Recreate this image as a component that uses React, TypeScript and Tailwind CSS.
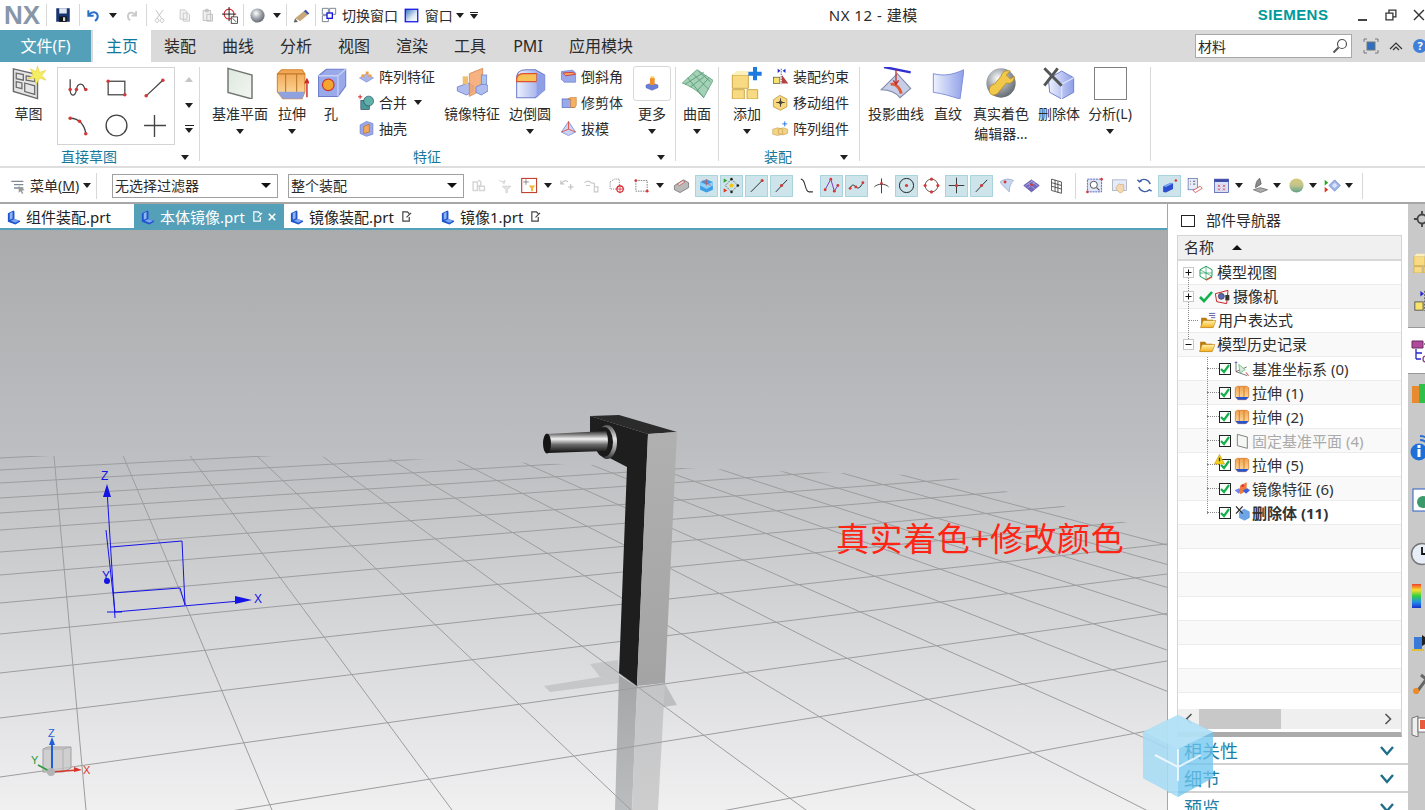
import type { ReactNode } from 'react';

function Svg({ s = 20, children }: { s?: number; children: ReactNode }) {
	return (
		<svg viewBox="0 0 24 24" width={s} height={s} className="shrink-0" fill="none">
			{children}
		</svg>
	);
}

const dot = (x: number, y: number, r = 1.7) => <circle cx={x} cy={y} r={r} fill="#d23a3a" />;

// every icon of the ribbon, the toolbars and the tree
const icons: Record<string, ReactNode> = {
	save: (
		<>
			<rect x="3" y="3" width="18" height="18" fill="#17356e" />
			<rect x="7" y="3" width="10" height="7" fill="#dfe6f2" />
			<rect x="7" y="14" width="10" height="7" fill="#111" />
			<rect x="12" y="15" width="3" height="5" fill="#d8d8d8" />
		</>
	),
	undo: <path d="M5 5v8h8M6 12c4-6 12-5 13 1 .5 3-1 6-4 8" stroke="#2a70c8" strokeWidth="3" />,
	redo: <path d="M19 5v8h-8M18 12c-4-6-12-5-13 1-.5 3 1 6 4 8" stroke="#c9c9c9" strokeWidth="3" />,
	cut: <path d="M6 3l9 13M18 3L8 16M8 17a3 3 0 1 0 .1 0M16 17a3 3 0 1 0 .1 0" stroke="#c6c6c6" strokeWidth="1.6" />,
	copy: <path d="M5 3h8l3 3v12H5zM10 8h7l3 3v10H10z" fill="#f2f2f2" stroke="#c6c6c6" strokeWidth="1.4" />,
	paste: <path d="M5 4h12v16H5zM9 2h4v4H9zM11 10h9v11h-9z" fill="#eee" stroke="#bdbdbd" strokeWidth="1.4" />,
	target: (
		<>
			<circle cx="10" cy="10" r="7" stroke="#d8222a" strokeWidth="1.5" />
			<path d="M10 0v20M0 10h20" stroke="#111" strokeWidth="1.3" />
			<rect x="13" y="14" width="9" height="9" fill="#fff" stroke="#111" />
			<path d="M15 16l5 5" stroke="#111" />
		</>
	),
	ball: <circle cx="12" cy="12" r="10" fill="url(#gSphere)" />,
	pencil: (
		<>
			<path d="M3 16L15 6l6 5-11 9z" fill="#c8a878" />
			<path d="M15 6l3-2 5 5-2 2z" fill="#3a4ca8" />
			<path d="M3 16l4 5-6 1z" fill="#666" />
		</>
	),
	switchWin: (
		<>
			<path d="M2 2h9v9H2zM13 2h9v9h-9zM2 13h9v9H2z" stroke="#7b8794" strokeWidth="1.5" />
			<rect x="9" y="9" width="8" height="8" fill="#fff" stroke="#1515e0" strokeWidth="2" />
		</>
	),
	win: <rect x="2" y="2" width="20" height="20" fill="url(#gWin)" stroke="#1212e0" strokeWidth="2" />,
	sketch: (
		<>
			<path d="M1 2l17 4v17L1 18z" fill="#e6e6e6" stroke="#6a6a6a" strokeWidth="1" />
			<path d="M3 5l5 1v4L3 9zM10 7l6 1v3l-6-1zM3 11l4 1v4l-4-1zM9 12l7 2v6l-7-2z" stroke="#6a6a6a" strokeWidth=".9" />
			<path d="M18 0l1.4 4.5L24 3l-3 3.5L24 10l-4.5-1.5L17 13l-1-4.5L11 9l4-2.5L13 2l4 2z" fill="#f6ee62" stroke="#e4cb2c" strokeWidth=".4" />
		</>
	),
	spline: (
		<>
			<path d="M4 4v10c0 7 5 7 6 0 1-7 7-7 8 0" stroke="#444" strokeWidth="1.2" />
			{dot(4, 14)}
			{dot(10, 14)}
			{dot(19, 14)}
		</>
	),
	rectS: (
		<>
			<rect x="4" y="6" width="16" height="13" stroke="#444" strokeWidth="1.2" />
			{dot(4, 6)}
			{dot(20, 19)}
		</>
	),
	lineS: (
		<>
			<path d="M4 20L20 5" stroke="#444" strokeWidth="1.2" />
			{dot(4, 20)}
			{dot(20, 5)}
		</>
	),
	arcS: (
		<>
			<path d="M4 5c9 0 14 7 15 15" stroke="#444" strokeWidth="1.3" />
			{dot(4, 5)}
			{dot(13, 8)}
			{dot(19, 20)}
		</>
	),
	circleS: <circle cx="12" cy="12" r="10" stroke="#444" strokeWidth="1.3" />,
	plusS: <path d="M12 2v21M2 12h21" stroke="#444" strokeWidth="1.3" />,
	datum: <path d="M3 1l18 5v18L3 19z" fill="url(#gDatum)" stroke="#6f7670" strokeWidth="1.1" />,
	extrude: (
		<>
			<path d="M1 5l3-3h15l2 3v13l-2 5H5l-4-5z" fill="url(#gOrange)" stroke="#d58a30" strokeWidth=".8" />
			<path d="M7 5v15M15 5v15M1 5h20" stroke="#c07a2c" strokeWidth=".8" />
			<path d="M1 18l4 5h14l2-5z" fill="#8fa2df" />
			<path d="M22.5 22V10M21 12l1.5-3 1.5 3" stroke="#d02020" strokeWidth="1" />
		</>
	),
	hole: (
		<>
			<path d="M2 6l6-5h15v13l-6 8H2z" fill="#9aa9ea" stroke="#6c7ccb" strokeWidth=".8" />
			<path d="M2 6h15v16M17 6l6-5" stroke="#c8d2f4" strokeWidth="1" />
			<circle cx="9.5" cy="13" r="4.5" fill="#f3a52f" stroke="#d12e2e" strokeWidth=".9" />
		</>
	),
	pattern: (
		<>
			<path d="M2 14l10-6 10 6-10 6z" fill="#a9b5ea" stroke="#6c7ccb" strokeWidth=".7" />
			<rect x="5" y="9" width="4" height="4" fill="#f0a040" />
			<rect x="11" y="5" width="4" height="4" fill="#f0a040" />
			<rect x="15" y="9" width="4" height="4" fill="#f0a040" />
		</>
	),
	unite: (
		<>
			<rect x="4" y="9" width="12" height="13" fill="#4b9a9a" stroke="#235" strokeWidth=".8" />
			<circle cx="15" cy="10" r="7" fill="#5fb0a6" stroke="#235" strokeWidth=".8" />
			<path d="M3 1v6M0 4h6" stroke="#d02020" strokeWidth="1.3" />
		</>
	),
	shell: (
		<>
			<path d="M3 7l9-5 9 3v15l-9 3-9-4z" fill="#9aa9ea" stroke="#6c7ccb" />
			<path d="M8 9l8-3v11l-8 2z" fill="#f3a860" stroke="#c06a20" />
		</>
	),
	mirror: (
		<>
			<path d="M1 15l8-3 4 2v4l-5 3-7-3z" fill="#aebcf0" stroke="#7787d0" strokeWidth=".7" />
			<path d="M10 5l10-4v16l-10 5z" fill="#f5a56c" opacity=".85" stroke="#d87a3a" strokeWidth=".7" />
			<path d="M15 15l6-3 3 2v4l-5 3-4-2z" fill="#aebcf0" stroke="#7787d0" strokeWidth=".7" />
			<rect x="19" y="6" width="4" height="7" fill="#a9c4ee" stroke="#7787d0" strokeWidth=".6" />
			<rect x="5" y="7" width="4" height="6" fill="#f0c070" />
		</>
	),
	blend: (
		<>
			<path d="M2 8c0-4 3-6 7-6h7l7 4v11l-7 6H2z" fill="url(#gBlue)" stroke="#6c7ccb" strokeWidth=".8" />
			<path d="M2 9c0-3 3-4 6-4h9v6H2z" fill="#f7c25a" stroke="#e0522a" strokeWidth=".9" />
			<path d="M17 5l6 1v11l-6 6z" fill="#8e9fe8" />
		</>
	),
	chamfer: (
		<>
			<path d="M2 5l16-2 4 4v13H6l-4-4z" fill="#9aa9ea" stroke="#6c7ccb" />
			<path d="M4 7l15-1 2 3-13 2z" fill="#f3a860" stroke="#d03030" strokeWidth="1.2" />
		</>
	),
	trim: (
		<>
			<rect x="3" y="7" width="18" height="12" fill="#9aa9ea" stroke="#5566c0" />
			<path d="M11 7l4-2h8v11l-2 3h-6V7z" fill="#f4b15f" stroke="#c9752a" strokeWidth=".8" />
		</>
	),
	draft: (
		<>
			<path d="M12 2L2 17l10 5 10-5z" fill="#c9d2f2" stroke="#6c7ccb" />
			<path d="M12 2v11M2 17l10-4 10 4" stroke="#e04830" strokeWidth="1.2" />
		</>
	),
	more: (
		<>
			<path d="M3 15l9-3 9 3v4l-9 4-9-4z" fill="#6a7ed8" stroke="#4a5cb0" strokeWidth=".7" />
			<rect x="9" y="4" width="7" height="11" rx="1" fill="#f0902c" />
			<rect x="10" y="2" width="5" height="3" fill="#f9d050" />
		</>
	),
	surface: (
		<>
			<path d="M1 12L12 2l12 8-7 13C12 17 6 14 1 12z" fill="#a4d2b6" stroke="#6aa585" strokeWidth=".7" />
			<path d="M5 8l12 15M9 5l12 12M13 3l9 8M3 13l14-9M7 15l12-9M12 18l9-10" stroke="#5f9d7c" strokeWidth=".7" />
		</>
	),
	add: (
		<>
			<path d="M1 6h12v10H1zM1 17h9v7H1zM12 17h8v7h-8z" fill="#f8da82" stroke="#c9a440" strokeWidth=".7" />
			<path d="M1 6l3-3h9v3z" fill="#fdf0bb" />
			<path d="M18 0v10M13 5h10" stroke="#1f7ae0" strokeWidth="3" />
		</>
	),
	constraint: (
		<>
			<rect x="2" y="13" width="9" height="9" fill="#f7e36a" stroke="#555" />
			<path d="M14 22V10l9 12z" fill="#b34242" />
			<path d="M13 1v22" stroke="#222" strokeDasharray="2 1.5" />
			<path d="M8 1l4 3-4 3zM19 1l-4 3 4 3z" fill="#2a2ac8" />
		</>
	),
	move: (
		<>
			<path d="M2 8l9-6 10 5v11l-9 5-10-5z" fill="#f8d87c" stroke="#b3872e" strokeWidth="1" />
			<path d="M12 9l3 3-3 3-3-3zM12 6v12M6 12h12" stroke="#333" strokeWidth="1.2" />
		</>
	),
	arrayC: (
		<>
			<path d="M1 13l7-2 7 2v7l-7 2-7-2zM9 13l7-2 6 2v6l-6 2-7-2z" fill="#f3d385" stroke="#b9913e" strokeWidth=".7" />
			<path d="M18 2v7M14.5 5.5h7" stroke="#2a7ae0" strokeWidth="1.4" />
		</>
	),
	project: (
		<>
			<path d="M1 17L13 5l10 11-8 7C11 18 6 17 1 17z" fill="#c7cfe6" stroke="#7b86a8" strokeWidth=".8" />
			<path d="M8 13c4-1 7 3 8 7" stroke="#dd5a36" strokeWidth="2.2" />
			<path d="M3 0l20 4" stroke="#3030d0" strokeWidth="1.8" />
			<path d="M12 2v10M10 10l2 3 2-3" stroke="#c03030" strokeWidth="1" />
		</>
	),
	ruled: <path d="M1 5c8 2 14 1 23-3l-3 22c-7-2-12-4-20-5z" fill="url(#gBlue)" stroke="#7a8ad8" strokeWidth=".7" />,
	studio: (
		<>
			<circle cx="12" cy="12" r="11" fill="url(#gSphere)" />
			<path d="M4 20c2 2 5 1 7-2l5-6c3 1 6-1 6-5l-3 2-3-3 3-3c-4-1-6 1-7 4l-5 6c-3 0-5 4-3 7z" fill="#f1c84a" stroke="#b38a1e" strokeWidth=".6" />
		</>
	),
	del: (
		<>
			<path d="M4 9l10-6 9 5v11l-9 5-9-5z" fill="url(#gBlue)" stroke="#6c7ccb" strokeWidth=".7" />
			<path d="M14 13l9-5M14 13v11M14 13L5 9" stroke="#dfe6fb" strokeWidth=".9" />
			<path d="M1 1l13 13M11 1L1 14" stroke="#555" strokeWidth="2.2" />
		</>
	),
	menu: (
		<>
			<path d="M2 5h18M6 10h14M6 15h14" stroke="#7d8a96" strokeWidth="2" />
			<path d="M13 12l9 6-4 1 2 4-2 1-2-4-3 2z" fill="#9a9a9a" />
		</>
	),
	g1: <path d="M3 7h6v12H3zM10 5a4 4 0 1 1 0 8M12 13h7v6h-7z" stroke="#d5d5d5" strokeWidth="2" />,
	g2: <path d="M4 4c2 3 6 3 9 1l-2 5M9 13h12l-5 5v4h-2v-4z" fill="#e4e4e4" stroke="#ccc" />,
	filterBox: (
		<>
			<rect x="1" y="2" width="21" height="20" fill="#fff" stroke="#c0392b" strokeWidth="1.5" />
			<path d="M7 3v8M3 7h8" stroke="#666" />
			<path d="M11 12h9l-3 4v4h-3v-4z" fill="#f2b632" />
		</>
	),
	g3: <path d="M5 10c1-5 6-6 9-3M4 5v5h5M14 14h8M18 10v8" stroke="#bdbdbd" strokeWidth="1.5" />,
	g4: <path d="M2 8c3-3 7-3 9 0l5 1v5h5v7h-5v-6M4 12h6" stroke="#c9c9c9" strokeWidth="1.7" />,
	pointCube: (
		<>
			<path d="M3 7l6-4h7v10l-5 4H3z" stroke="#555" strokeDasharray="1.5 1.5" />
			<circle cx="17" cy="17" r="4.5" stroke="#d21f26" strokeWidth="1.5" />
			<path d="M17 11v12M11 17h12" stroke="#d21f26" />
		</>
	),
	selRect: (
		<>
			<rect x="4" y="5" width="16" height="15" stroke="#444" strokeDasharray="2 1.5" />
			{dot(4, 5, 2)}
			{dot(20, 20, 2)}
		</>
	),
	eraser: (
		<>
			<path d="M2 12l13-8 7 4v7l-12 7-8-4z" fill="#b9b9b9" stroke="#666" />
			<path d="M6 10l8-5 3 2-8 5z" fill="#e2e2e2" stroke="#c33" strokeWidth=".8" />
		</>
	),
	cubeBlue: (
		<>
			<path d="M3 7l9-4 9 4v11l-9 4-9-4z" fill="#3d9ee8" />
			<path d="M3 7l9 4 9-4v5l-9 5-9-5z" fill="#8fd0f7" />
			<path d="M12 3v9M6 5l12 7" stroke="#d84a4a" strokeWidth=".9" />
		</>
	),
	snapAll: (
		<>
			<path d="M12 3l9 9-9 9-9-9z" stroke="#333" strokeDasharray="2 1.5" />
			<circle cx="12" cy="12" r="3" fill="#f5c518" />
			<path d="M1 2l5 3-5 3z" fill="#2aa52a" />
			<path d="M1 16l5 3-5 3z" fill="#d32" />
			<circle cx="12" cy="3" r="1.8" fill="#222" />
			<circle cx="21" cy="12" r="1.8" fill="#222" />
			<circle cx="12" cy="21" r="1.8" fill="#222" />
		</>
	),
	lineEnd: (
		<>
			<path d="M4 21L20 5" stroke="#222" strokeWidth="1.3" />
			{dot(20, 5, 2.2)}
		</>
	),
	lineMid: (
		<>
			<path d="M4 21L20 4" stroke="#222" strokeWidth="1.3" />
			{dot(12, 12, 2.2)}
		</>
	),
	curveS: <path d="M4 3c8 0 4 17 12 18h5" stroke="#333" strokeWidth="1.5" />,
	poly: (
		<>
			<path d="M3 18L11 3l5 17 5-8" stroke="#7a2ac0" strokeWidth="1.3" />
			{dot(3, 18, 2)}
			{dot(11, 3, 2)}
			{dot(16, 20, 2)}
			{dot(21, 12, 2)}
		</>
	),
	waves: (
		<>
			<path d="M2 17c4-8 6-6 9-3s6 2 10-6" stroke="#222" strokeWidth="1.3" />
			{dot(3, 16, 2)}
			{dot(11, 14, 2)}
			{dot(21, 8, 2)}
		</>
	),
	inter: (
		<>
			<path d="M2 14c4-5 16-5 20 0M12 2v21" stroke="#333" strokeWidth="1.3" />
			{dot(12, 9, 2)}
		</>
	),
	circleC: (
		<>
			<circle cx="12" cy="12" r="10" stroke="#222" strokeWidth="1.4" />
			{dot(12, 12, 2.2)}
		</>
	),
	circleQ: (
		<>
			<circle cx="12" cy="12" r="9" stroke="#555" strokeWidth="1.3" />
			{dot(12, 3, 2.2)}
			{dot(21, 12, 2.2)}
			{dot(12, 21, 2.2)}
			{dot(3, 12, 2.2)}
		</>
	),
	cross: (
		<>
			<path d="M12 1v22M1 12h22" stroke="#222" strokeWidth="1.2" />
			{dot(12, 12, 2.2)}
		</>
	),
	faceDot: (
		<>
			<path d="M3 7c6-5 13-5 19-2-4 4-6 8-6 16C10 15 6 12 3 7z" fill="#c9d8f0" stroke="#7f93c0" strokeWidth=".8" />
			{dot(10, 7, 2)}
		</>
	),
	mesh: (
		<>
			<path d="M1 12l11-8 11 8-11 9z" fill="#7268c0" stroke="#4c4490" strokeWidth=".8" />
			<path d="M6 8l11 9M11 5l10 8M6 16l11-9M3 13l11-8" stroke="#d8d4f0" strokeWidth=".7" />
			{dot(12, 11, 2)}
		</>
	),
	grid: <path d="M5 3l14 4v16L5 19zM10 4v16M14 6v16M5 8l14 4M5 13l14 4" stroke="#333" strokeWidth="1.1" />,
	zoomBox: (
		<>
			<rect x="2" y="3" width="20" height="18" fill="#dfe6f7" stroke="#2b3ab0" strokeDasharray="3 1" />
			<circle cx="11" cy="11" r="5" fill="#fff" stroke="#555" strokeWidth="1.4" />
			<path d="M15 15l4 4" stroke="#555" strokeWidth="1.5" />
			{dot(22, 3, 1.8)}
			{dot(2, 21, 1.8)}
		</>
	),
	pan: (
		<>
			<rect x="2" y="4" width="20" height="15" fill="#e6ecf7" stroke="#9aa4b8" />
			<path d="M11 10c1-1 2 0 2 1l2-1 1 1 2 0v6c0 3-2 5-4 5h-2c-2-1-4-4-5-7z" fill="#f4d9b0" stroke="#b99361" strokeWidth=".7" />
		</>
	),
	rotate: <path d="M20 10A9 9 0 0 0 5 6M4 14a9 9 0 0 0 15 4M2 4l3 3 3-2M22 20l-3-2-3 2" stroke="#3f5fa8" strokeWidth="2" />,
	fly: (
		<>
			<path d="M3 13l11-5 3 1v8L7 22l-4-1z" fill="#2a4fd0" />
			<path d="M14 8l3 1-10 5-4-1z" fill="#7fa3f0" />
			{dot(21, 5, 1.8)}
		</>
	),
	listView: (
		<>
			<rect x="3" y="2" width="13" height="16" fill="#e8ecf8" stroke="#5a6ab0" />
			<path d="M6 6h1M10 6h3M6 10h1M10 10h3" stroke="#445" strokeWidth="1.2" />
			<path d="M10 19l10-6 3 3-10 6z" fill="#fff" stroke="#c33" />
		</>
	),
	calendar: (
		<>
			<rect x="2" y="3" width="20" height="19" fill="#dbe2f7" stroke="#3c4ca8" />
			<rect x="2" y="3" width="20" height="4" fill="#3c4ca8" />
			<path d="M7 11l3 3M10 11l-3 3M14 11l3 3M17 11l-3 3M7 16l3 3M10 16l-3 3M14 16l3 3M17 16l-3 3" stroke="#d33" />
		</>
	),
	scan: (
		<>
			<path d="M2 18l10-3 10 3-10 4z" fill="#aaa" stroke="#666" />
			<path d="M5 15c0-7 3-12 6-13l2 8z" fill="#8c8c8c" stroke="#555" />
		</>
	),
	globe: <circle cx="12" cy="12" r="10" fill="url(#gEarth)" />,
	flag: (
		<>
			<path d="M1 4l5 4-5 4z" fill="#2aa52a" />
			<path d="M1 14l5 4-5 4z" fill="#d32" />
			<path d="M7 12l8-8 8 8-8 8z" fill="#9fb6ec" stroke="#6c7ccb" />
			<path d="M11 12l4-4 4 4-4 4z" fill="#dbe4fb" />
		</>
	),
	csysGreen: (
		<>
			<path d="M12 2l9 5v10l-9 5-9-5V7z" stroke="#1e9e5a" strokeWidth="1.5" />
			<path d="M12 2v20M3 12h18M3 7l18 10" stroke="#1e9e5a" strokeWidth="1" />
			<path d="M12 23l9-5" stroke="#e0482c" strokeWidth="1.8" />
		</>
	),
	camera: (
		<>
			<path d="M2 7l19-5-2 20-15-3z" fill="#f6f6f6" stroke="#c82828" strokeWidth="1.5" />
			<circle cx="11" cy="11" r="4.5" fill="#5968b8" stroke="#333" />
			<rect x="17" y="9" width="6" height="8" fill="#333" />
		</>
	),
	folder: (
		<>
			<path d="M3 8h7l2 3h8v11H3z" fill="#b97a0e" />
			<path d="M2 22l4-10h18l-4 10z" fill="url(#gFolder)" stroke="#b97a0e" strokeWidth=".8" />
		</>
	),
	folderDoc: (
		<>
			<path d="M14 2h9M14 5h9M17 8h6" stroke="#4a4a9c" strokeWidth="1.2" />
			<path d="M3 8h7l2 3h8v11H3z" fill="#b97a0e" />
			<path d="M2 22l4-10h18l-4 10z" fill="url(#gFolder)" stroke="#b97a0e" strokeWidth=".8" />
		</>
	),
	csysT: (
		<>
			<path d="M3 1v15M3 16l17 6M3 16l16-7" stroke="#555" strokeWidth="1.2" />
			<path d="M7 5l10 8-8 5z" fill="#d8e8d8" stroke="#2a5" strokeWidth=".8" />
			<path d="M1 2h4" stroke="#2626c8" />
			<path d="M18 17l4 5" stroke="#c22" strokeWidth="1.3" />
		</>
	),
	extrudeT: (
		<>
			<path d="M2 4l3-2h14l3 2v14l-4 4H6l-4-4z" fill="url(#gOrange)" stroke="#cf6d16" strokeWidth="1" />
			<path d="M8 3v17M15 3v17" stroke="#cf6d16" strokeWidth="1.2" />
			<path d="M2 18l4 4h12l4-4z" fill="#2a52cc" />
		</>
	),
	datumT: <path d="M5 2l15 4v17L5 19z" fill="#f4f7f4" stroke="#666" strokeWidth="1.2" />,
	mirrorT: (
		<>
			<path d="M1 14l7-3 5 3-6 5z" fill="#6f86e8" />
			<path d="M9 7l10-5v13l-10 5z" fill="#ee7a40" />
			<path d="M13 14l7-3 4 3-6 5z" fill="#3a5fd8" />
			<circle cx="13" cy="7" r="2" fill="#d33" />
		</>
	),
	delT: (
		<>
			<path d="M8 11l7-5 8 4v9l-7 4-8-4z" fill="#6ca6e8" stroke="#3c78c0" strokeWidth=".6" />
			<path d="M3 2l10 11M13 2L3 13" stroke="#333" strokeWidth="2" />
		</>
	),
};

function Ic({ n, s }: { n: string; s?: number }) {
	return <Svg s={s}>{icons[n]}</Svg>;
}

function Caret({ className = '' }: { className?: string }) {
	return <span className={`block h-0 w-0 shrink-0 border-x-[4.5px] border-t-[5px] border-x-transparent border-t-[#1f1f1f] ${className}`} />;
}

function Sep() {
	return <div className="my-[5px] w-px shrink-0 bg-[#d9d9d9]" />;
}

function Big({ n, s = 34, label, sub, caret, w, framed }: { n?: string; s?: number; label: string; sub?: string; caret?: boolean; w: string; framed?: boolean }) {
	return (
		<div className={`flex shrink-0 flex-col items-center ${w}`}>
			<div className="flex h-[42px] items-center justify-center">
				{framed ? (
					<div className="flex h-[35px] w-[38px] items-center justify-center rounded-[3px] border border-[#d8d8d8]">{n && <Ic n={n} s={s} />}</div>
				) : n ? (
					<Ic n={n} s={s} />
				) : (
					<div className="h-[33px] w-[33px] border border-[#808080] bg-white" />
				)}
			</div>
			<div className="h-[20px] whitespace-nowrap leading-[20px]">{label}</div>
			{sub && <div className="h-[20px] whitespace-nowrap leading-[20px]">{sub}</div>}
			{caret && (
				<div className="flex h-[14px] items-center">
					<Caret />
				</div>
			)}
		</div>
	);
}

function Small({ n, label, caret }: { n: string; label: string; caret?: boolean }) {
	return (
		<div className="flex h-[26px] items-center whitespace-nowrap">
			<span className="mr-[5px] flex w-[16px] justify-center">
				<Ic n={n} s={17} />
			</span>
			{label}
			{caret && <Caret className="ml-[7px]" />}
		</div>
	);
}

function GroupTitle({ title, w }: { title: string; w: string }) {
	return (
		<div className="flex h-[18px] items-center">
			<div className={`text-center leading-[18px] text-[#17789c] ${w}`}>{title}</div>
			<Caret className="ml-[3px]" />
		</div>
	);
}

function Tb({ n, on, w = 'w-[25px]' }: { n: string; on?: boolean; w?: string }) {
	return (
		<div className={`flex h-[22px] shrink-0 items-center justify-center ${w}`}>
			<div className={`flex h-[22px] w-[23px] items-center justify-center border ${on ? 'border-[#a9d3dd] bg-[#cde4ea]' : 'border-transparent'}`}>
				<Ic n={n} s={17} />
			</div>
		</div>
	);
}

function ComboBox({ text, w }: { text: string; w: string }) {
	return (
		<div className={`flex h-[24px] shrink-0 items-center justify-between border border-[#a0a0a0] bg-white pl-[2px] pr-[6px] leading-[22px] ${w}`}>
			<span>{text}</span>
			<span className="block h-0 w-0 border-x-[5px] border-t-[5px] border-x-transparent border-t-[#111]" />
		</div>
	);
}

function DocMark({ className = '' }: { className?: string }) {
	return (
		<svg viewBox="0 0 12 12" width="11" height="11" className={`shrink-0 ${className}`} fill="none" stroke="currentColor" strokeWidth="1.3">
			<path d="M9 6.5V11H2V1h5l2 2M6 7l5-5" />
		</svg>
	);
}

function PartMark() {
	return (
		<svg viewBox="0 0 16 16" width="15" height="16" className="shrink-0">
			<path d="M2 4l6-3 1 1v8l6 2v1l-5 3-8-3z" fill="#1f55cc" />
			<path d="M4 4l3-1.5v7L4 11z" fill="#8fb4f4" />
			<path d="M5 12l4-2 5 2-4 2z" fill="#7aa5f0" />
		</svg>
	);
}

function FileTab({ name, w, active, pl }: { name: string; w: string; active?: boolean; pl: string }) {
	return (
		<div className={`flex h-[24px] shrink-0 items-center pt-[1px] text-[15px] ${w} ${pl} ${active ? 'bg-[#55a0b9] text-white' : 'text-[#222]'}`}>
			<PartMark />
			<span className="ml-[5px] whitespace-nowrap leading-[24px]">{name}</span>
			{active ? (
				<>
					<DocMark className="ml-[7px]" />
					<svg viewBox="0 0 10 10" width="8" height="8" className="ml-[5px]" stroke="#fff" strokeWidth="2">
						<path d="M1 1l8 8M9 1l-8 8" />
					</svg>
				</>
			) : (
				name !== '组件装配.prt' && <DocMark className="ml-[7px] text-[#444]" />
			)}
		</div>
	);
}

function Box() {
	return (
		<svg viewBox="0 0 12 12" width="12" height="12" className="shrink-0">
			<rect x=".5" y=".5" width="11" height="11" fill="#fff" stroke="#222" />
			<path d="M2 6l3 3 5-7" fill="none" stroke="#12b14a" strokeWidth="2.2" />
		</svg>
	);
}

function Expander({ minus }: { minus?: boolean }) {
	return (
		<div className="relative z-10 flex h-[11px] w-[11px] shrink-0 items-center justify-center border border-[#c8c8c8] bg-white">
			<svg viewBox="0 0 9 9" width="9" height="9" stroke="#111">
				<path d={minus ? 'M1.5 4.5h6' : 'M1.5 4.5h6M4.5 1.5v6'} />
			</svg>
		</div>
	);
}

function Row({ alt, children }: { alt?: boolean; children?: ReactNode }) {
	return <div className={`flex h-[24px] shrink-0 items-center border-b border-[#ececec] pl-px ${alt ? 'bg-[#f9f9f9]' : 'bg-white'}`}>{children}</div>;
}

function Feature({ n, label, alt, gray, bold, warn }: { n: string; label: string; alt?: boolean; gray?: boolean; bold?: boolean; warn?: boolean }) {
	return (
		<Row alt={alt}>
			<div className="ml-[28px] w-[12px] border-t border-dotted border-[#888]" />
			<div className="relative">
				<Box />
				{warn && (
					<svg viewBox="0 0 12 12" width="11" height="11" className="absolute -left-[5px] -top-[5px]">
						<path d="M6 .5L11.5 11H.5z" fill="#f6d21f" stroke="#b58f00" strokeWidth=".6" />
						<path d="M6 4v4" stroke="#333" strokeWidth="1.4" />
					</svg>
				)}
			</div>
			<span className="mx-[2px] flex w-[17px] justify-center">
				<Ic n={n} s={16} />
			</span>
			<span className={`whitespace-nowrap text-[15px] leading-[24px] ${gray ? 'text-[#aaa]' : 'text-[#333]'} ${bold ? 'font-bold text-[#222]' : ''}`}>{label}</span>
		</Row>
	);
}

function Section({ title, border }: { title: string; border?: boolean }) {
	return (
		<div className={`flex h-[28px] shrink-0 items-center justify-between pl-[16px] pr-[14px] pt-[2px] text-[18px] leading-[26px] text-[#1f7fa5] ${border ? 'border-b-2 border-[#d2d2d2]' : ''}`}>
			<span>{title}</span>
			<svg viewBox="0 0 14 10" width="14" height="10" fill="none" stroke="#1e6e8a" strokeWidth="2.4">
				<path d="M1 1l6 7 6-7" />
			</svg>
		</div>
	);
}

// floor grid of the graphics window: two vanishing points, page coordinates
const depthVP = { x: 35, y: 246 };
const sideVP = { x: 3526, y: 283 };
// where each depth line meets y=810, read off the reference
const depthLines = [-100, 86, 272, 452, 631, 806, 975, 1146, 1307, 1469, 1615, 1765, 1905, 2040, 2170, 2290, 2410, 2530].map((x810) => {
	const t = (1200 - depthVP.y) / (810 - depthVP.y);
	return { x1: depthVP.x, y1: depthVP.y, x2: depthVP.x + (x810 - depthVP.x) * t, y2: 1200 };
});
const sideLines = [458, 470, 483, 498, 513, 530, 552, 575, 603, 634, 673, 718, 777, 848, 947, 1077].map((y0) => ({
	x1: 0,
	y1: y0,
	x2: sideVP.x,
	y2: sideVP.y,
}));

function Viewport() {
	return (
		<svg viewBox="0 230 1167 580" className="h-full w-full" fill="none">
			<defs>
				<clipPath id="floor">
					<path d="M0 456L300 456L533 463L740 470L947 476L1167 533V810H0z" />
				</clipPath>
				<linearGradient id="gCyl" x1="0" y1="0" x2="0" y2="1">
					<stop offset="0" stopColor="#2a2a2a" />
					<stop offset=".18" stopColor="#8a8a8a" />
					<stop offset=".36" stopColor="#f4f4f4" />
					<stop offset=".62" stopColor="#6a6a6a" />
					<stop offset="1" stopColor="#0c0c0c" />
				</linearGradient>
				<linearGradient id="gCollar" x1="0" y1="0" x2="0" y2="1">
					<stop offset="0" stopColor="#555" />
					<stop offset=".4" stopColor="#e4e4e4" />
					<stop offset=".7" stopColor="#999" />
					<stop offset="1" stopColor="#333" />
				</linearGradient>
				<linearGradient id="gFace" x1="0" y1="0" x2="0" y2="1">
					<stop offset="0" stopColor="#b0b0b0" />
					<stop offset="1" stopColor="#a4a4a4" />
				</linearGradient>
				<linearGradient id="gMirrorA" x1="0" y1="0" x2="0" y2="1">
					<stop offset="0" stopColor="#a4a5a6" />
					<stop offset="1" stopColor="#bcbdbe" />
				</linearGradient>
				<linearGradient id="gMirrorB" x1="0" y1="0" x2="0" y2="1">
					<stop offset="0" stopColor="#c4c5c6" />
					<stop offset="1" stopColor="#cdcdce" />
				</linearGradient>
			</defs>

			{/* shadow and reflection of the part on the floor */}
			<path d="M590 664L618 660L620 683L600 677z" fill="#c6c7c8" />
			<path d="M544 686L600 677L620 683L550 692z" fill="#c6c7c8" />
			<path d="M622 688L665 684L677 705L648 709z" fill="#bdbebf" />
			<path d="M619 675L637 687L632 810H615z" fill="url(#gMirrorA)" />
			<path d="M637 687L665 683L658 810H632z" fill="url(#gMirrorB)" />

			<g clipPath="url(#floor)" stroke="#9d9d9f" strokeWidth="1">
				{depthLines.map((l, i) => (
					<line key={i} {...l} />
				))}
				{sideLines.map((l, i) => (
					<line key={i} {...l} />
				))}
			</g>

			{/* the part */}
			<path d="M590 416L619 415L677 432L648 434z" fill="#2b2b2b" />
			<path d="M590 416L648 434L637 686L619 673L627 467L600 453L590 445z" fill="#1e1e1e" />
			<path d="M648 434L677 432L665 683L637 686z" fill="url(#gFace)" />
			<ellipse cx="607" cy="442" rx="10" ry="17" fill="url(#gCollar)" />
			<ellipse cx="604" cy="442" rx="9" ry="15" fill="#1a1a1a" />
			<path d="M547 434L606 431Q610 441 606 451L547 453z" fill="url(#gCyl)" />
			<ellipse cx="547" cy="443.5" rx="4" ry="10" fill="#151515" />

			{/* datum csys */}
			<g stroke="#1414e6" strokeWidth="1">
				<path d="M115 618L107 490M106 530L115 612M111 547L182 541L185 605M113 593L180 588L185 605M107 612H122M115 612L240 601" />
			</g>
			<path d="M103 497L107 484L111 497z" fill="#1414e6" />
			<path d="M252 600L235 596V604z" fill="#1414e6" />
			<circle cx="107" cy="581" r="3" fill="#1414e6" />
			<g fill="#1414e6" fontFamily="Liberation Sans" fontSize="12">
				<text x="101" y="480">Z</text>
				<text x="254" y="603">X</text>
				<text x="102" y="580">Y</text>
			</g>

			{/* view triad */}
			<path d="M43 749L48 747H71V768L63 772H43z" fill="#c8c8c8" fillOpacity=".8" stroke="#a0a0a0" />
			<path d="M43 749H63V772M63 749L71 747" stroke="#b0b0b0" />
			<path d="M52 772V742" stroke="#1f5fd8" strokeWidth="2" />
			<path d="M49 745L52 737L55 745z" fill="#1f5fd8" />
			<path d="M51 772L38 765" stroke="#2c9a3c" strokeWidth="1.5" />
			<path d="M51 772L78 770" stroke="#d8342c" strokeWidth="1.6" />
			<path d="M74 767L82 770L74 772z" fill="#d8342c" />
			<circle cx="51" cy="772" r="4" fill="#b4b4b4" />
			<g fontFamily="Liberation Sans" fontSize="11">
				<text x="48" y="737" fill="#1f5fd8">Z</text>
				<text x="31" y="764" fill="#2c9a3c">Y</text>
				<text x="83" y="774" fill="#d8342c">X</text>
			</g>
		</svg>
	);
}

export default function App() {
	return (
		<div className="relative flex h-[810px] w-[1425px] flex-col overflow-hidden bg-white font-['Noto_Sans','Noto_Sans_CJK_SC',sans-serif] text-[14px] text-[#2b2b2b]">
			{/* shared gradients for the icons */}
			<svg className="absolute h-0 w-0">
				<defs>
					<radialGradient id="gSphere" cx=".4" cy=".35" r=".7">
						<stop offset="0" stopColor="#fff" />
						<stop offset=".55" stopColor="#9a9fa6" />
						<stop offset="1" stopColor="#5f656c" />
					</radialGradient>
					<linearGradient id="gWin" x1="0" y1="0" x2="1" y2="1">
						<stop offset="0" stopColor="#2f6fc0" />
						<stop offset=".6" stopColor="#dfe9f5" />
						<stop offset="1" stopColor="#fff" />
					</linearGradient>
					<linearGradient id="gDatum" x1="0" y1="0" x2="1" y2="1">
						<stop offset="0" stopColor="#dde8dd" />
						<stop offset="1" stopColor="#f3f6f2" />
					</linearGradient>
					<linearGradient id="gOrange" x1="0" y1="0" x2="0" y2="1">
						<stop offset="0" stopColor="#f2a24e" />
						<stop offset="1" stopColor="#fbe0a6" />
					</linearGradient>
					<linearGradient id="gBlue" x1="0" y1="0" x2="1" y2="0">
						<stop offset="0" stopColor="#eef1fd" />
						<stop offset="1" stopColor="#8e9fe8" />
					</linearGradient>
					<linearGradient id="gFolder" x1="0" y1="0" x2="0" y2="1">
						<stop offset="0" stopColor="#fff3b0" />
						<stop offset="1" stopColor="#f5b21c" />
					</linearGradient>
					<linearGradient id="gEarth" x1="0" y1="0" x2="0" y2="1">
						<stop offset="0" stopColor="#d9c97a" />
						<stop offset=".5" stopColor="#c0c48c" />
						<stop offset="1" stopColor="#5ea08a" />
					</linearGradient>
				</defs>
			</svg>

			{/* title bar */}
			<div className="flex h-[30px] shrink-0 items-center">
				<div className="w-[46px] pl-[4px] font-['Liberation_Sans',sans-serif] text-[26px] font-bold leading-[30px] text-[#8797a8]">NX</div>
				<div className="h-[22px] w-px bg-[#d8d8d8]" />
				<div className="flex w-[33px] justify-center"><Ic n="save" s={18} /></div>
				<div className="h-[22px] w-px bg-[#d8d8d8]" />
				<div className="flex w-[26px] justify-center"><Ic n="undo" s={16} /></div>
				<Caret className="ml-[3px]" />
				<div className="flex w-[30px] justify-center"><Ic n="redo" s={14} /></div>
				<div className="ml-[-1px] h-[22px] w-px bg-[#d8d8d8]" />
				<div className="flex w-[27px] justify-center"><Ic n="cut" s={15} /></div>
				<div className="flex w-[23px] justify-center"><Ic n="copy" s={15} /></div>
				<div className="flex w-[23px] justify-center"><Ic n="paste" s={15} /></div>
				<div className="flex w-[24px] justify-center"><Ic n="target" s={17} /></div>
				<div className="h-[22px] w-px bg-[#d8d8d8]" />
				<div className="flex w-[28px] justify-center"><Ic n="ball" s={17} /></div>
				<Caret className="ml-[2px]" />
				<div className="ml-[5px] h-[22px] w-px bg-[#d8d8d8]" />
				<div className="flex w-[28px] justify-center"><Ic n="pencil" s={17} /></div>
				<div className="h-[22px] w-px bg-[#d8d8d8]" />
				<div className="ml-[5px] flex w-[16px] justify-center"><Ic n="switchWin" s={16} /></div>
				<span className="ml-[5px] whitespace-nowrap">切换窗口</span>
				<div className="ml-[6px] flex w-[16px] justify-center"><Ic n="win" s={15} /></div>
				<span className="ml-[5px] whitespace-nowrap">窗口</span>
				<Caret className="ml-[3px]" />
				<div className="ml-[6px] flex flex-col items-center">
					<div className="mb-[1px] h-px w-[8px] bg-[#222]" />
					<Caret />
				</div>
				<div className="ml-[351px] whitespace-nowrap text-[15px] tracking-[.5px]">NX 12 - 建模</div>
				<div className="ml-[340px] font-['Liberation_Sans',sans-serif] text-[15px] font-bold tracking-[.45px] text-[#009999]">SIEMENS</div>
				<div className="ml-[30px] mt-[10px] h-[2px] w-[9px] bg-[#444]" />
				<svg viewBox="0 0 12 12" width="12" height="12" className="ml-[18px]" fill="none" stroke="#333" strokeWidth="1.3">
					<path d="M1 4h7v7H1zM4 4V1h7v7H8" />
				</svg>
				<svg viewBox="0 0 12 12" width="12" height="12" className="ml-[16px]" fill="none" stroke="#333" strokeWidth="1.4">
					<path d="M1 1l10 10M11 1L1 11" />
				</svg>
			</div>

			{/* ribbon tabs */}
			<div className="flex h-[32px] shrink-0 items-stretch bg-[#dadada] text-[16px]">
				<div className="flex w-[91px] shrink-0 items-center justify-center bg-[#55a0b9] text-white">文件(F)</div>
				<div className="ml-[2px] flex w-[58px] shrink-0 items-center justify-center bg-white text-[#0e7aa0]">主页</div>
				{['装配', '曲线', '分析', '视图', '渲染', '工具', 'PMI'].map((t) => (
					<div key={t} className="flex w-[58px] shrink-0 items-center justify-center">
						{t}
					</div>
				))}
				<div className="flex w-[88px] shrink-0 items-center justify-center">应用模块</div>
				<div className="ml-[550px] mt-[4px] flex h-[24px] w-[157px] shrink-0 items-center justify-between border border-[#a8a8a8] bg-white pl-[2px] pr-[3px] text-[14px]">
					<span>材料</span>
					<svg viewBox="0 0 16 16" width="16" height="16" fill="none" stroke="#555" strokeWidth="1.2">
						<circle cx="10" cy="6" r="4.5" />
						<path d="M6.5 9.5L1.5 14.5" strokeWidth="2" />
					</svg>
				</div>
				<div className="ml-[11px] flex shrink-0 items-center">
					<svg viewBox="0 0 16 16" width="16" height="16" fill="none" stroke="#777">
						<path d="M1 4V1h3M12 1h3v3M15 12v3h-3M4 15H1v-3" />
						<rect x="4" y="4" width="8" height="8" fill="#2f6fc0" />
					</svg>
				</div>
				<div className="ml-[10px] flex shrink-0 items-center">
					<svg viewBox="0 0 14 10" width="14" height="10" fill="none" stroke="#333" strokeWidth="1.2">
						<path d="M1 8l6-6 6 6M4 9l3-3 3 3" />
					</svg>
				</div>
				<div className="ml-[10px] flex shrink-0 items-center">
					<div className="flex h-[14px] w-[14px] shrink-0 items-center justify-center rounded-full bg-[#3f7fd8] text-[11px] font-bold text-white">?</div>
				</div>
			</div>

			{/* ribbon */}
			<div className="flex h-[106px] shrink-0 border-b-2 border-[#dedede]">
				<div className="flex w-[199px] shrink-0 flex-col">
					<div className="flex h-[86px]">
						<Big n="sketch" s={34} label="草图" w="w-[57px]" />
						<div className="mt-[5px] grid h-[78px] w-[118px] shrink-0 grid-cols-3 place-items-center border border-[#d4d4d4] px-[1px]">
							{['spline', 'rectS', 'lineS', 'arcS', 'circleS', 'plusS'].map((n) => (
								<Ic key={n} n={n} s={25} />
							))}
						</div>
						<div className="flex w-[24px] flex-col items-center pl-[4px] pt-[15px]">
							<span className="block h-0 w-0 border-x-[4px] border-b-[5px] border-x-transparent border-b-[#c4c4c4]" />
							<Caret className="mt-[21px]" />
							<div className="mt-[17px] h-px w-[9px] bg-[#222]" />
							<Caret className="mt-[2px]" />
						</div>
					</div>
					<GroupTitle title="直接草图" w="w-[178px]" />
				</div>
				<Sep />
				<div className="flex w-[475px] shrink-0 flex-col">
					<div className="flex h-[86px]">
						<Big n="datum" s={32} label="基准平面" caret w="w-[80px]" />
						<Big n="extrude" s={33} label="拉伸" caret w="w-[24px]" />
						<Big n="hole" s={31} label="孔" w="w-[54px]" />
						<div className="w-[86px] shrink-0 pt-[1px]">
							<Small n="pattern" label="阵列特征" />
							<Small n="unite" label="合并" caret />
							<Small n="shell" label="抽壳" />
						</div>
						<Big n="mirror" s={32} label="镜像特征" w="w-[56px]" />
						<Big n="blend" s={32} label="边倒圆" caret w="w-[60px]" />
						<div className="w-[73px] shrink-0 pt-[1px]">
							<Small n="chamfer" label="倒斜角" />
							<Small n="trim" label="修剪体" />
							<Small n="draft" label="拔模" />
						</div>
						<Big n="more" s={16} label="更多" caret framed w="w-[38px]" />
					</div>
					<GroupTitle title="特征" w="w-[454px]" />
				</div>
				<Sep />
				<div className="w-[42px] shrink-0">
					<Big n="surface" s={32} label="曲面" caret w="w-[42px]" />
				</div>
				<Sep />
				<div className="flex w-[140px] shrink-0 flex-col">
					<div className="flex h-[86px]">
						<div className="ml-[3px]">
							<Big n="add" s={32} label="添加" caret w="w-[50px]" />
						</div>
						<div className="w-[87px] shrink-0 pt-[1px]">
							<Small n="constraint" label="装配约束" />
							<Small n="move" label="移动组件" />
							<Small n="arrayC" label="阵列组件" />
						</div>
					</div>
					<GroupTitle title="装配" w="w-[118px]" />
				</div>
				<Sep />
				<div className="flex w-[290px] shrink-0 pl-[8px]">
					<Big n="project" s={32} label="投影曲线" w="w-[56px]" />
					<Big n="ruled" s={32} label="直纹" w="w-[48px]" />
					<Big n="studio" s={32} label="真实着色" sub="编辑器..." w="w-[58px]" />
					<Big n="del" s={32} label="删除体" w="w-[58px]" />
					<Big label="分析(L)" caret w="w-[44px]" />
				</div>
				<Sep />
			</div>

			{/* selection bar */}
			<div className="flex h-[36px] shrink-0 items-center border-b-2 border-[#a6a6a6] pt-px">
				<div className="ml-[10px] flex w-[16px] justify-center"><Ic n="menu" s={16} /></div>
				<span className="ml-[4px] whitespace-nowrap">菜单(<span className="underline">M</span>)</span>
				<Caret className="ml-[4px]" />
				<div className="ml-[5px] h-[26px] w-px bg-[#d8d8d8]" />
				<ComboBox text="无选择过滤器" w="ml-[15px] w-[166px]" />
				<ComboBox text="整个装配" w="ml-[10px] w-[176px]" />
				<div className="ml-[3px] flex items-center">
					<Tb n="g1" />
					<Tb n="g2" />
					<Tb n="filterBox" />
					<Caret className="mx-[2px]" />
					<Tb n="g3" />
					<Tb n="g4" />
					<Tb n="pointCube" />
					<Tb n="selRect" />
					<Caret className="mx-[2px]" />
					<div className="w-[3px]" />
					<Tb n="eraser" />
					<Tb n="cubeBlue" on />
					<Tb n="snapAll" on />
					<Tb n="lineEnd" on />
					<Tb n="lineMid" on />
					<Tb n="curveS" />
					<Tb n="poly" on />
					<Tb n="waves" on />
					<Tb n="inter" />
					<Tb n="circleC" on />
					<Tb n="circleQ" />
					<Tb n="cross" on />
					<Tb n="lineMid" on />
					<Tb n="faceDot" />
					<Tb n="mesh" />
					<Tb n="grid" />
					<div className="mx-[6px] h-[26px] w-px bg-[#d8d8d8]" />
					<Tb n="zoomBox" />
					<Tb n="pan" />
					<Tb n="rotate" />
					<Tb n="fly" on />
					<Tb n="listView" />
					<Tb n="calendar" w="w-[28px]" />
					<Caret className="mr-[5px]" />
					<Tb n="scan" />
					<Caret className="mr-[3px]" />
					<Tb n="globe" />
					<Caret className="mr-[3px]" />
					<Tb n="flag" />
					<Caret />
				</div>
				<div className="ml-[9px] h-[26px] w-px bg-[#d8d8d8]" />
			</div>

			{/* work area */}
			<div className="flex min-h-0 flex-1">
				<div className="flex w-[1167px] shrink-0 flex-col">
					<div className="flex h-[24px] shrink-0">
						<FileTab name="组件装配.prt" w="w-[134px]" pl="pl-[6px]" />
						<FileTab name="本体镜像.prt" w="w-[150px]" pl="pl-[6px]" active />
						<FileTab name="镜像装配.prt" w="w-[156px]" pl="pl-[5px]" />
						<FileTab name="镜像1.prt" w="w-[120px]" pl="pl-[0px]" />
					</div>
					<div className="h-[2px] shrink-0 bg-[#55a0b9]" />
					<div className="relative min-h-0 flex-1 bg-[linear-gradient(#a9abad,#bdbec1_38%,#f0f0f1)]">
						<Viewport />
						<div className="absolute left-[836px] top-[287px] whitespace-nowrap text-[33px] leading-[44px] tracking-[.6px] text-[#ff2414]">真实着色+修改颜色</div>
					</div>
				</div>

				{/* part navigator */}
				<div className="flex w-[241px] shrink-0 flex-col border-l border-[#a6a6a6]">
					<div className="flex h-[31px] shrink-0 items-center pl-[13px] pt-[2px] text-[15px]">
						<div className="h-[12px] w-[14px] border-[1.5px] border-[#222]" />
						<span className="ml-[11px]">部件导航器</span>
					</div>
					<div className="ml-[9px] flex h-[502px] w-[225px] shrink-0 flex-col border border-[#d4d4d4] border-b-[5px] border-b-[#ababab]">
						<div className="flex h-[25px] shrink-0 items-center border-b-2 border-[#d8d8d8] bg-[#f0f0f0] pl-[6px] text-[15px]">
							名称
							<span className="ml-[18px] block h-0 w-0 border-x-[5px] border-b-[5px] border-x-transparent border-b-[#111]" />
						</div>
						<div className="relative min-h-0 flex-1 overflow-hidden">
							<div className="absolute left-[10px] top-[12px] h-[72px] border-l border-dotted border-[#888]" />
							<div className="absolute left-[29px] top-[96px] h-[157px] border-l border-dotted border-[#888]" />
							<Row>
								<div className="ml-[4px]"><Expander /></div>
								<span className="ml-[3px] mr-[2px] flex w-[18px] justify-center"><Ic n="csysGreen" s={16} /></span>
								<span className="whitespace-nowrap text-[15px] leading-[25px]">模型视图</span>
							</Row>
							<Row alt>
								<div className="ml-[4px]"><Expander /></div>
								<svg viewBox="0 0 14 12" width="14" height="12" className="ml-[5px]" fill="none" stroke="#12b14a" strokeWidth="2.6">
									<path d="M1 6l4 4 8-9" />
								</svg>
								<span className="ml-px flex w-[16px] justify-center"><Ic n="camera" s={16} /></span>
								<span className="ml-[3px] whitespace-nowrap text-[15px] leading-[25px]">摄像机</span>
							</Row>
							<Row>
								<div className="ml-[10px] w-[9px] border-t border-dotted border-[#888]" />
								<span className="mr-[2px] flex w-[18px] justify-center"><Ic n="folderDoc" s={17} /></span>
								<span className="whitespace-nowrap text-[15px] leading-[25px]">用户表达式</span>
							</Row>
							<Row alt>
								<div className="ml-[4px]"><Expander minus /></div>
								<span className="ml-[3px] mr-[2px] flex w-[18px] justify-center"><Ic n="folder" s={17} /></span>
								<span className="whitespace-nowrap text-[15px] leading-[25px]">模型历史记录</span>
							</Row>
							<Feature n="csysT" label="基准坐标系 (0)" />
							<Feature n="extrudeT" label="拉伸 (1)" alt />
							<Feature n="extrudeT" label="拉伸 (2)" />
							<Feature n="datumT" label="固定基准平面 (4)" alt gray />
							<Feature n="extrudeT" label="拉伸 (5)" warn />
							<Feature n="mirrorT" label="镜像特征 (6)" alt />
							<Feature n="delT" label="删除体 (11)" bold />
							{[1, 2, 3, 4, 5, 6, 7, 8, 9].map((i) => (
								<Row key={i} alt={i % 2 === 1} />
							))}
						</div>
						<div className="flex h-[20px] shrink-0 items-center bg-[#efefef]">
							<svg viewBox="0 0 8 12" width="8" height="12" className="ml-[7px]" fill="none" stroke="#555" strokeWidth="1.6"><path d="M6.5 1L1.5 6l5 5" /></svg>
							<div className="ml-[6px] h-[20px] w-[82px] bg-[#c8c8c8]" />
							<svg viewBox="0 0 8 12" width="8" height="12" className="ml-[103px]" fill="none" stroke="#555" strokeWidth="1.6"><path d="M1.5 1l5 5-5 5" /></svg>
						</div>
						<div className="h-[3px] shrink-0 bg-white" />
					</div>
					<Section title="相关性" border />
					<Section title="细节" border />
					<Section title="预览" />
				</div>

				{/* resource bar */}
				<div className="flex w-[17px] shrink-0 flex-col overflow-hidden bg-[#c9c9c9]">
					<div className="flex h-[124px] shrink-0 flex-col items-start border-b border-[#999] pl-[5px] pt-[6px]">
						<svg viewBox="0 0 20 20" width="18" height="18" className="shrink-0" fill="none" stroke="#444" strokeWidth="2"><circle cx="10" cy="10" r="5" /><path d="M10 1v4M10 15v4M1 10h4M15 10h4" /></svg>
						<div className="mt-[23px] h-[20px] w-[22px] shrink-0"><Ic n="add" s={22} /></div>
						<div className="mt-[19px] h-[20px] w-[22px] shrink-0"><Ic n="constraint" s={22} /></div>
					</div>
					<div className="flex h-[45px] shrink-0 items-center bg-white pl-[3px]">
						<svg viewBox="0 0 22 24" width="22" height="24" className="shrink-0" fill="none">
							<path d="M1 2h11v7H1z" fill="#b04a9c" stroke="#6a2a60" />
							<path d="M5 10v10M5 14h6M5 20h5" stroke="#2626c8" strokeWidth="1.3" />
							<circle cx="15" cy="20" r="3" stroke="#8a3a80" strokeWidth="1.3" />
							<path d="M13 5h6" stroke="#111" />
						</svg>
					</div>
					<div className="flex flex-1 flex-col items-start gap-[23px] border-t border-[#999] pl-[2px] pt-[8px]">
						<div className="h-[22px] w-[26px] shrink-0">
							<svg viewBox="0 0 24 22" width="26" height="22"><rect x="1" y="4" width="7" height="17" fill="#e88a30" /><rect x="8" y="2" width="7" height="19" fill="#2fc04a" /><rect x="15" y="3" width="7" height="18" fill="#2f8fe0" /></svg>
						</div>
						<div className="mt-[8px] h-[26px] w-[24px] shrink-0">
							<svg viewBox="0 0 24 26" width="24" height="26"><path d="M10 1c5 0 10 3 12 9M10 5c3 0 7 2 9 7" stroke="#2d6fd0" strokeWidth="2" fill="none" /><circle cx="9" cy="17" r="8.5" fill="#1f6fd8" /><rect x="7.5" y="14" width="3" height="8" fill="#fff" /><rect x="7.5" y="10" width="3" height="3" fill="#fff" /></svg>
						</div>
						<div className="mt-[4px] h-[24px] w-[22px] shrink-0 pl-[2px]">
							<svg viewBox="0 0 22 24" width="22" height="24"><rect x="1" y="1" width="20" height="22" fill="#fff" stroke="#2a5fc0" /><circle cx="11" cy="14" r="6" fill="#3a9a6a" /></svg>
						</div>
						<div className="mt-[7px] h-[24px] w-[24px] shrink-0">
							<svg viewBox="0 0 24 24" width="24" height="24" fill="none"><circle cx="12" cy="12" r="10.5" fill="#e8eef8" stroke="#777" strokeWidth="1.5" /><path d="M12 5v7h5" stroke="#111" strokeWidth="1.8" /></svg>
						</div>
						<div className="-mt-[5px] ml-[2px] h-[24px] w-[9px] shrink-0 bg-[linear-gradient(#f0402a,#f8e030,#30d040,#2090e8,#1830d0)]" />
						<div className="h-[20px] w-[20px] shrink-0 pl-[2px]">
							<svg viewBox="0 0 20 20" width="20" height="20"><path d="M2 6h8v12H2z" fill="#3a7ad8" /><path d="M0 18h12v2H0z" fill="#e0c040" /><path d="M10 4l9 6-9 5z" fill="#222" /></svg>
						</div>
						<div className="-mt-[3px] h-[24px] w-[20px] shrink-0 pl-[2px]">
							<svg viewBox="0 0 20 24" width="20" height="24" fill="none"><path d="M4 22L16 6M9 4l8 6" stroke="#666" strokeWidth="3" /><circle cx="4" cy="20" r="3" fill="#ef8a24" /></svg>
						</div>
						<div className="-mt-[3px] h-[22px] w-[22px] shrink-0">
							<svg viewBox="0 0 22 22" width="22" height="22"><path d="M2 3l6-2v21l-6-2z" fill="#eee" stroke="#777" /><rect x="8" y="3" width="14" height="14" fill="#fff" stroke="#777" /><rect x="10" y="5" width="10" height="9" fill="#e85a3c" /></svg>
						</div>
					</div>
				</div>
			</div>

			{/* site watermark lying over the window */}
			<svg viewBox="0 0 70 82" width="70" height="82" className="pointer-events-none absolute left-[1143px] top-[715px]">
				<path d="M35 0L70 17V63L35 82L0 63V17z" fill="#6cc4ee" opacity=".75" />
				<path d="M35 0L70 17L35 34L0 17z" fill="#bfe6f8" opacity=".8" />
				<path d="M0 17L35 34V82L0 63z" fill="#d2eefa" opacity=".5" />
				<path d="M35 34V66M12 40L35 52L58 40" stroke="#fff" strokeWidth="2" fill="none" opacity=".75" />
			</svg>
		</div>
	);
}
